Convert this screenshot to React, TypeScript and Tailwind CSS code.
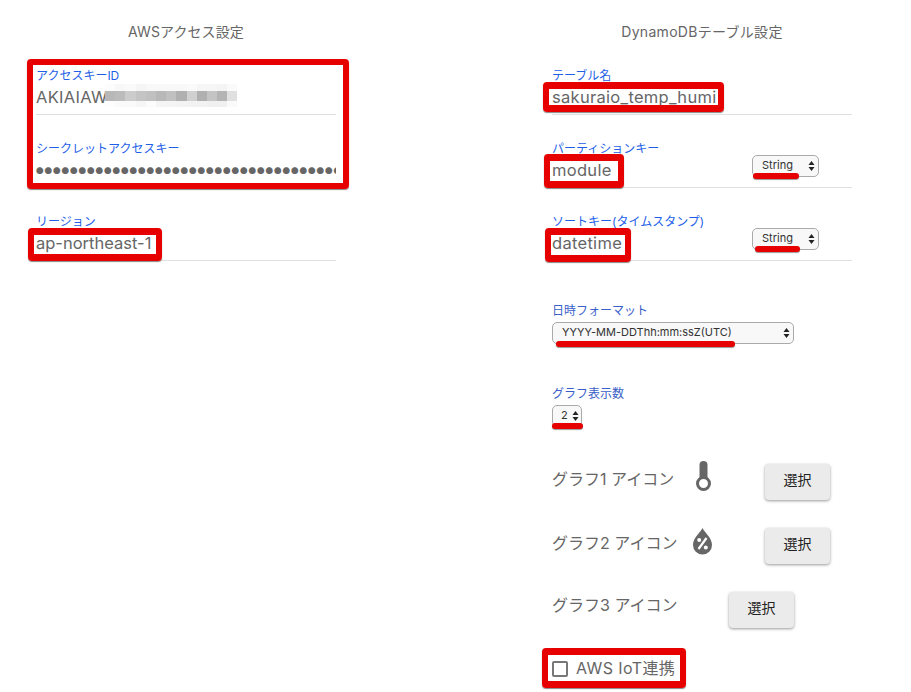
import type { ReactNode } from "react";

const redBox = "absolute border-x-[6px] border-y-[7px] border-[#e60000] rounded-sm shadow-[0_1px_1px_#888] ";

const blurTop = ["#fcfcfc", "#f8f8f8", "#fafafa", "#f5f5f5", "#f8f8f8", "#f8f8f8", "#f8f8f8", "#f8f8f8", "#fafafa", "#f6f6f6", "#f6f6f6", "#f4f4f4", "#fafafa"];
const blurMid = ["#b8b8b8", "#bcbcbc", "#cccccc", "#c4c4c4", "#c0c0c0", "#b8b8b8", "#c0c0c0", "#b0b0b0", "#d0d0d0", "#b0b0b0", "#c4c4c4", "#b4b4b4", "#e0e0e0"];
const blurBottom = ["#fdfdfd", "#fafafa", "#f9f9f9", "#f6f6f6", "#fcfcfc", "#f5f5f5", "#f4f4f4", "#f3f3f3", "#f2f2f2", "#f2f2f2", "#f0f0f0", "#f0f0f0", "#fafafa"];

function Field({ label, value, boxClass, children }: { label: string; value: ReactNode; boxClass?: string; children?: ReactNode }) {
  return (
    <div className="relative h-[73px]">
      <div className="h-[14px] pt-px text-xs leading-[14px] text-[#1f5fe8]">{label}</div>
      <div className="flex justify-between items-start border-b border-[#e0e0e0] h-[33px] text-[16.5px] tracking-[0.3px] leading-6 text-[#666]">
        <div className="pt-[3px] min-w-0 overflow-hidden whitespace-nowrap">{value}</div>
        {children}
      </div>
      {boxClass && <div className={redBox + boxClass} />}
    </div>
  );
}

function FakeSelect({ text, className, markClass }: { text: string; className: string; markClass: string }) {
  return (
    <div className={"relative flex items-center justify-between h-[22px] pl-[9px] pr-[3px] border border-[#aaa] rounded-[5px] bg-[#f8f8f8] text-[11px] tracking-normal leading-none text-[#333] " + className}>
      <span className="-mt-[2px]">{text}</span>
      <svg width="7" height="12" viewBox="0 0 7 12" className="shrink-0">
        <path d="M3.5 1 L6.5 5 H0.5Z M3.5 11 L0.5 7 H6.5Z" fill="#222" />
      </svg>
      <div className={"absolute h-[6px] rounded-full bg-[#e60000] shadow-[0_1px_1px_#999] " + markClass} />
    </div>
  );
}

function Thermometer() {
  return (
    <svg width="17" height="30" viewBox="0 0 17 30" className="block">
      <path d="M4.5 4 a4 4 0 0 1 8 0 V17 H4.5Z" fill="#666" />
      <circle cx="8.5" cy="22.5" r="6" fill="#fff" stroke="#666" strokeWidth="3" />
    </svg>
  );
}

function Drop() {
  return (
    <svg width="19" height="27" viewBox="0 0 19 27" className="block">
      <path d="M9.5 0 C12 5 19 10 19 17 A9.5 9.5 0 0 1 0 17 C0 10 7 5 9.5 0Z" fill="#666" />
      <path d="M13.5 10 L5.5 21" stroke="#fff" strokeWidth="2.2" />
      <circle cx="6.2" cy="12" r="2" fill="#fff" />
      <circle cx="12.8" cy="19.5" r="2" fill="#fff" />
    </svg>
  );
}

function IconRow({ label, icon, gapClass, textClass }: { label: string; icon?: ReactNode; gapClass: string; textClass: string }) {
  return (
    <div className="flex h-9 items-center">
      <span className={"w-[143px] text-base leading-6 text-[#666] " + textClass}>{label}</span>
      <div className={gapClass}>{icon}</div>
      <button className="w-[65px] h-9 pb-1 rounded-sm bg-[#ebebeb] text-sm text-[#222] shadow-[0_1px_3px_#999]">選択</button>
    </div>
  );
}

export default function App() {
  return (
    <div className="relative w-[911px] h-[692px] bg-white overflow-hidden flex font-['Inter','Noto_Sans_CJK_JP',sans-serif]">
      <div className="w-[300px] ml-9 pt-[22px]">
        <div className="text-center text-sm tracking-[0.1px] leading-5 text-[#666] mb-[26px]">AWSアクセス設定</div>
        <div className="relative">
          <Field label="アクセスキーID" value="AKIAIAW" />
          <Field
            label="シークレットアクセスキー"
            value={<span className="block mt-px text-[7.5px] tracking-[1px] font-['Noto_Sans_CJK_JP',sans-serif] leading-6">{"●".repeat(40)}</span>}
          />
          <div className={redBox + "left-[-9px] top-[-9px] w-[322px] h-[130px] !border-y-[6px]"} />
          <div className="absolute left-[69px] top-4 flex flex-col">
            {[{ row: blurTop, h: "h-[7px]" }, { row: blurMid, h: "h-[10px]" }, { row: blurBottom, h: "h-[6px]" }].map(({ row, h }, i) => (
              <div key={i} className={"flex " + h}>
                {row.map((c, j) => (
                  <div key={j} className="w-[10.2px]" style={{ backgroundColor: c }} />
                ))}
              </div>
            ))}
          </div>
        </div>
        <Field label="リージョン" value={<span className="tracking-normal">ap-northeast-1</span>} boxClass="left-[-8px] top-[14px] w-[134px] h-[33px]" />
      </div>

      <div className="w-[300px] ml-[216px] pt-[22px]">
        <div className="text-center text-sm tracking-[0.3px] leading-5 text-[#666] mb-[26px]">DynamoDBテーブル設定</div>
        <Field label="テーブル名" value="sakuraio_temp_humi" boxClass="left-[-9px] top-[14px] w-[181px] h-[30px]" />
        <Field label="パーティションキー" value="module" boxClass="left-[-8px] top-[13px] w-[80px] h-[34px]">
          <FakeSelect text="String" className="w-[67px] mr-[33px]" markClass="left-[0px] top-[17px] w-[46px]" />
        </Field>
        <Field label="ソートキー(タイムスタンプ)" value="datetime" boxClass="left-[-7px] top-[14px] w-[86px] h-[34px]">
          <FakeSelect text="String" className="w-[67px] mr-[33px]" markClass="left-[2px] top-[17px] w-[45px]" />
        </Field>

        <div className="mt-4 h-[14px] pt-px text-xs leading-[14px] text-[#3b5fc8]">日時フォーマット</div>
        <FakeSelect text="YYYY-MM-DDThh:mm:ssZ(UTC)" className="w-[242px] mt-[5px]" markClass="left-[3px] top-[18px] w-[179px]" />

        <div className="mt-[42px] h-[14px] pt-px text-xs leading-[14px] text-[#3b5fc8]">グラフ表示数</div>
        <FakeSelect text="2" className="w-[30px] mt-[5px] !pl-[8px] !pr-[2px]" markClass="left-[-1px] top-[17px] w-[31px]" />

        <div className="mt-[37px] flex flex-col gap-7">
          <IconRow label="グラフ1 アイコン" icon={<Thermometer />} gapClass="w-[70px] -mt-[12px]" textClass="-mt-[6px]" />
          <IconRow label="グラフ2 アイコン" icon={<Drop />} gapClass="w-[72px] -ml-[2px] -mt-[10px]" textClass="-mt-[6px]" />
          <IconRow label="グラフ3 アイコン" gapClass="w-[34px]" textClass="-mt-[10px]" />
        </div>

        <div className="relative mt-[33px] flex items-center h-[16px] gap-2">
          <div className="w-[16px] h-[16px] border-2 border-[#777] rounded-[2px]" />
          <span className="text-base tracking-[0.4px] leading-6 text-[#666] -mt-[2px]">AWS IoT連携</span>
          <div className={redBox + "left-[-10px] top-[-13px] w-[144px] h-[40px]"} />
        </div>
      </div>
    </div>
  );
}
